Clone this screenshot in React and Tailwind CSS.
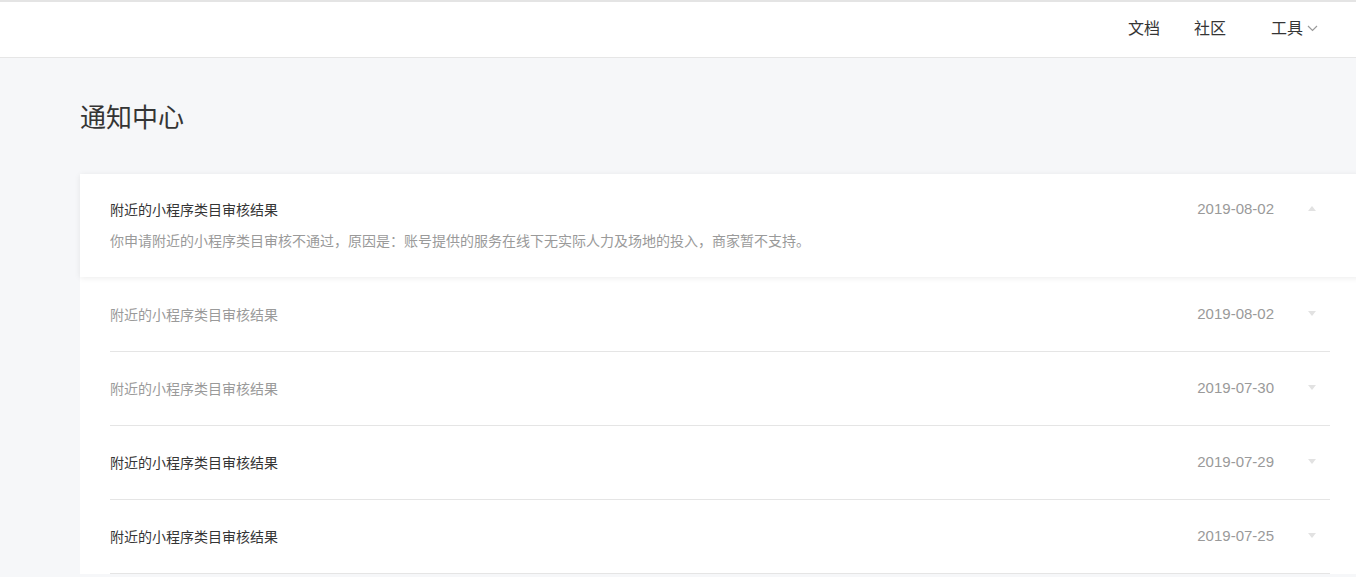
import React from 'react';

const font = { fontFamily: '"Noto Sans CJK SC", "Noto Sans", sans-serif' };
const dateFont = { fontFamily: '"Liberation Sans", "Noto Sans CJK SC", sans-serif' };

const notices = [
    { title: '附近的小程序类目审核结果', date: '2019-08-02', read: true },
    { title: '附近的小程序类目审核结果', date: '2019-07-30', read: true },
    { title: '附近的小程序类目审核结果', date: '2019-07-29', read: false },
    { title: '附近的小程序类目审核结果', date: '2019-07-25', read: false },
];

function Arrow({ up }) {
    return (
        <svg width="8" height="5" viewBox="0 0 8 5" className="block">
            {up ? <path d="M0 5 L4 0 L8 5 Z" fill="#e2e2e2" /> : <path d="M0 0 L8 0 L4 5 Z" fill="#e2e2e2" />}
        </svg>
    );
}

export default function App() {
    return (
        <div className="min-h-screen bg-[#f6f7f9] overflow-hidden" style={font}>
            {/* Top bar */}
            <header className="h-[58px] bg-white border-t-2 border-[#e4e4e4] border-b border-b-[#e6e6e6] flex items-center justify-end pr-[38px]">
                <nav className="flex items-center text-[16px] leading-[22px] text-[#353535] mb-[6px]">
                    <a className="mr-[34px]">文档</a>
                    <a className="mr-[45px]">社区</a>
                    <a className="flex items-center">
                        工具
                        <svg width="11" height="7" viewBox="0 0 11 7" className="ml-[4px] mt-[3px]">
                            <path d="M1 1 L5.5 5.5 L10 1" fill="none" stroke="#9a9a9a" strokeWidth="1.2" />
                        </svg>
                    </a>
                </nav>
            </header>

            <main className="pl-[80px]">
                <h1 className="text-[26px] leading-[36px] text-[#353535] pt-[40px] pb-[40px] font-normal">通知中心</h1>

                <div className="w-[1280px] bg-white">
                    {/* Expanded notice */}
                    <div className="bg-white shadow-[0_1px_6px_rgba(0,0,0,0.08)] px-[30px] pt-[25px] pb-[27px] relative z-10">
                        <div className="flex items-center text-[14px] leading-[20px]">
                            <span className="flex-1 text-[#353535]">附近的小程序类目审核结果</span>
                            <span className="text-[15px] text-[#9a9a9a]" style={dateFont}>2019-08-02</span>
                            <span className="ml-[34px] mr-[14px] -mt-[2px]"><Arrow up /></span>
                        </div>
                        <p className="mt-[11px] text-[14px] leading-[20px] text-[#9a9a9a]">
                            你申请附近的小程序类目审核不通过，原因是：账号提供的服务在线下无实际人力及场地的投入，商家暂不支持。
                        </p>
                    </div>

                    {/* Collapsed notices */}
                    <div className="px-[30px] pt-px">
                        {notices.map((n, i) => (
                            <div key={i} className="flex items-center border-b border-[#e5e5e5] pt-[26px] pb-[27px] text-[14px] leading-[20px]">
                                <span className={`flex-1 ${n.read ? 'text-[#9a9a9a]' : 'text-[#353535]'}`}>{n.title}</span>
                                <span className="text-[15px] text-[#9a9a9a]" style={dateFont}>{n.date}</span>
                                <span className="ml-[34px] mr-[14px] -mt-[2px]"><Arrow /></span>
                            </div>
                        ))}
                    </div>
                </div>
            </main>
        </div>
    );
}
